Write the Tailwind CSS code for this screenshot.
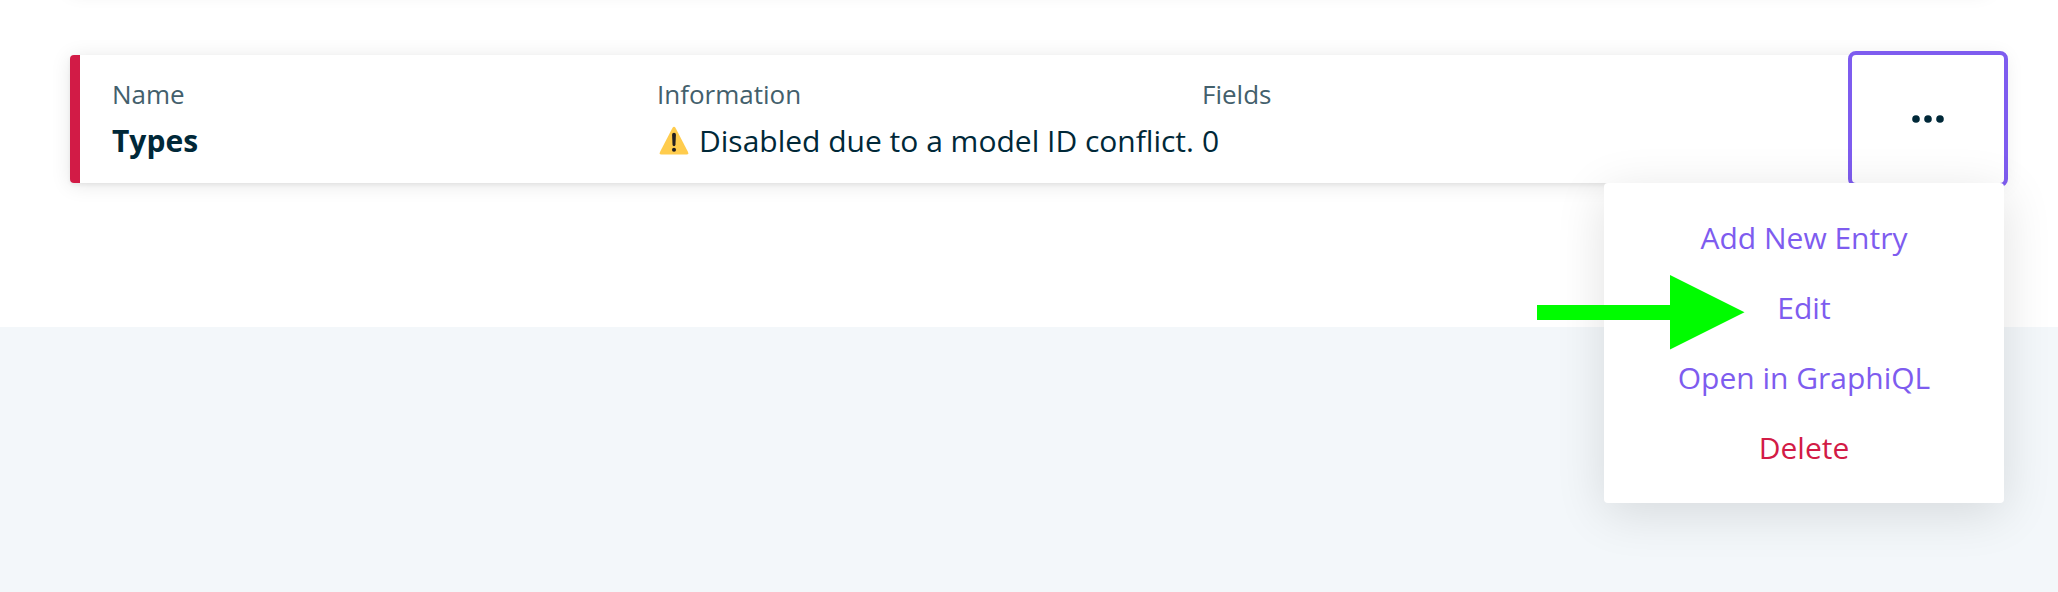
<!DOCTYPE html>
<html lang="en">
<head>
<meta charset="utf-8">
<title>Content Models</title>
<script src="https://cdn.jsdelivr.net/npm/@tailwindcss/browser@4"></script>
</head>
<body class="w-[2058px] h-[592px] overflow-hidden bg-[#f3f7fa] font-['Open_Sans','Noto_Sans',sans-serif] text-[#002838]">
<main class="relative flex h-[327px] flex-col bg-white px-[70px]">
  <div class="-mt-[83px] mb-[66px] h-[72px] shrink-0 rounded bg-white shadow-[0_2px_4px_rgba(0,0,0,0.06),0_2px_20px_rgba(0,0,0,0.10)]"></div>
  <section class="relative flex h-[128px] w-[1934px] rounded bg-white shadow-[0_2px_4px_rgba(0,0,0,0.06),0_2px_20px_rgba(0,0,0,0.10)]">
    <div class="w-[10px] rounded-l bg-[#d21b46]"></div>
    <div class="grid flex-1 grid-cols-[545px_545px_1fr] pt-[21px] pl-8">
      <div>
        <p class="text-[26px] leading-9 text-[#43606c]">Name</p>
        <p class="mt-[6px] text-[30px] leading-[46px] font-bold">Types</p>
      </div>
      <div>
        <p class="text-[26px] leading-9 text-[#43606c]">Information</p>
        <p class="mt-[6px] flex items-center whitespace-nowrap text-[30px] leading-[46px]">
          <svg class="mr-[10px] mb-[1px] ml-[2px] h-[29px] w-[30px] shrink-0" viewBox="0 0 31 30"><path d="M14 1.8Q15.500-.5 17 1.800L30 27Q31 29.500 28.500 29.500H2.500Q0 29.500 1 27Z" fill="#ffcc4d"/><path d="M13.500 9Q13.500 7 15.500 7T17.500 9L17 19.500Q16.900 21 15.500 21T14 19.500Z" fill="#231f20"/><circle cx="15.500" cy="24.500" r="2.100" fill="#231f20"/></svg>
          <span>Disabled due to a model ID conflict.</span>
        </p>
      </div>
      <div>
        <p class="text-[26px] leading-9 text-[#43606c]">Fields</p>
        <p class="mt-[6px] text-[30px] leading-[46px]">0</p>
      </div>
    </div>
    <button aria-label="Options" class="flex w-[152px] items-center justify-center rounded outline-4 outline-[#7e5cef]">
      <svg class="h-2 w-8" viewBox="0 0 32 8" fill="#002838"><circle cx="4" cy="4" r="3.800"/><circle cx="16" cy="4" r="3.800"/><circle cx="28" cy="4" r="3.800"/></svg>
    </button>
    <nav class="absolute top-[128px] right-0 flex h-[320px] w-[400px] flex-col rounded bg-white py-5 text-center text-[30px] leading-[70px] text-[#7e5cef] shadow-[0_10px_50px_rgba(0,0,0,0.12)]">
      <a>Add New Entry</a>
      <a>Edit</a>
      <a>Open in GraphiQL</a>
      <a class="text-[#d21b46]">Delete</a>
    </nav>
  </section>
  <svg class="absolute top-[275px] left-[1537px] h-[75px] w-[208px]" viewBox="0 0 208 75" fill="#00fc00"><path d="M0 30H133V0L207.500 37.200L133 74.500V45H0Z"/></svg>
</main>
</body>
</html>
